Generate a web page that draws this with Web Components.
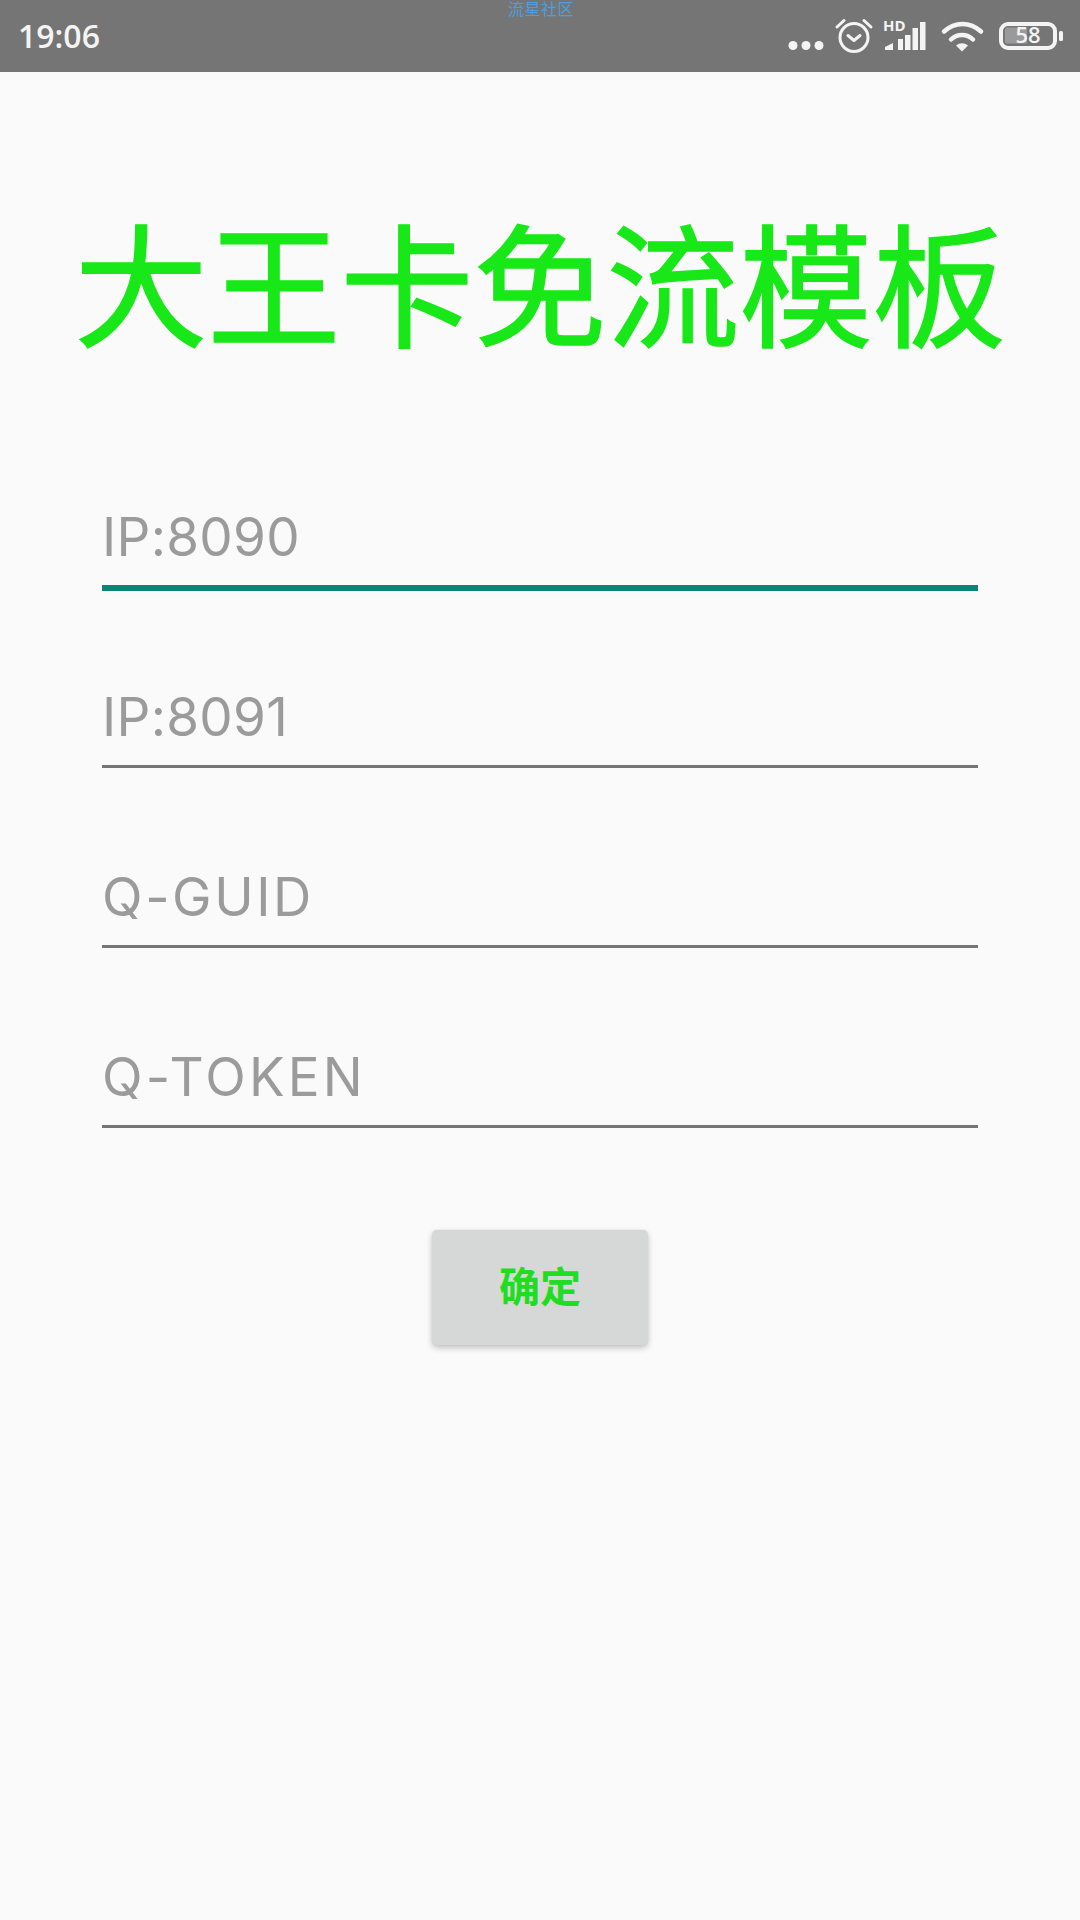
<!DOCTYPE html>
<html lang="zh">
<head>
<meta charset="utf-8">
<title>大王卡免流模板</title>
<style>
  html, body { margin: 0; padding: 0; background: #fafafa; }
  body { width: 1080px; height: 1920px; overflow: hidden; font-family: Inter, "Noto Sans CJK SC", sans-serif; }
</style>
</head>
<body>
<app-screen>
  <status-bar time="19:06" battery="58" watermark="流星社区"></status-bar>
  <page-title>大王卡免流模板</page-title>
  <form-field placeholder="IP:8090" focused style="--hint-spacing: 0.3px"></form-field>
  <form-field placeholder="IP:8091" style="--hint-spacing: 0.3px"></form-field>
  <form-field placeholder="Q-GUID" style="--hint-spacing: 2.6px"></form-field>
  <form-field placeholder="Q-TOKEN" style="--hint-spacing: 3.2px"></form-field>
  <raised-button>确定</raised-button>
</app-screen>

<script>
class AppScreen extends HTMLElement {
  constructor() {
    super();
    this.attachShadow({ mode: 'open' }).innerHTML = `
      <style>
        :host { display: flex; flex-direction: column; width: 1080px; height: 1920px; background: #fafafa; }
      </style>
      <slot></slot>`;
  }
}

class StatusBar extends HTMLElement {
  constructor() {
    super();
    const time = this.getAttribute('time');
    const battery = this.getAttribute('battery');
    const watermark = this.getAttribute('watermark');
    this.attachShadow({ mode: 'open' }).innerHTML = `
      <style>
        :host { display: flex; align-items: center; position: relative; height: 72px; flex: none;
          background: #757575; color: #f4f4f4; padding-left: 18px; box-sizing: border-box; }
        .time { font: 600 32px/1 "Open Sans", "Noto Sans", sans-serif; }
        .mark { position: absolute; left: 508px; top: 0; font: 16px/19px "Liberation Sans", "Noto Sans CJK SC", sans-serif;
          letter-spacing: 0.5px; color: #4c9ee0; }
        svg { display: block; margin-left: auto; }
        text { font-family: "Open Sans", "Noto Sans", sans-serif; fill: #f4f4f4; }
      </style>
      <span class="time">${time}</span>
      <span class="mark">${watermark}</span>
      <svg width="300" height="72" viewBox="780 0 300 72">
        <g fill="#f4f4f4">
          <circle cx="793" cy="45.5" r="4.5"/><circle cx="806" cy="45.5" r="4.5"/><circle cx="819" cy="45.5" r="4.5"/>
        </g>
        <g fill="none" stroke="#f4f4f4" stroke-width="3" stroke-linecap="round" stroke-linejoin="round">
          <circle cx="854" cy="37.5" r="14"/>
          <path d="M848 35.500 854 40.500 860 35.500"/>
          <path d="M837 27 844 20.500M871 27 864 20.500"/>
        </g>
        <text x="883" y="30.500" font-size="15" font-weight="700">HD</text>
        <g fill="#f4f4f4">
          <path d="M885 50v-3l8-4v7z"/>
          <rect x="898" y="39" width="5" height="11"/>
          <rect x="905" y="35" width="5.500" height="15"/>
          <rect x="912.500" y="28" width="5.500" height="22"/>
          <rect x="920" y="22" width="5.500" height="28"/>
        </g>
        <g fill="none" stroke="#f4f4f4" stroke-width="4.500" stroke-linecap="round">
          <path d="M944 31.500C955 21.500 970 21.500 981 31.500"/>
          <path d="M951 39.500C957 33.500 967 33.500 973 39.500"/>
        </g>
        <path d="M956 45.500C960 42.500 964 42.500 968 45.500L962 51.500z" fill="#f4f4f4"/>
        <rect x="1001" y="24" width="54" height="24" rx="7" fill="none" stroke="#f4f4f4" stroke-width="4"/>
        <path d="M1007 27.500h20v16h-20a2 2 0 0 1-2-2v-12a2 2 0 0 1 2-2z" fill="#9a9a9a"/>
        <text x="1028" y="43" font-size="22" font-weight="600" text-anchor="middle">${battery}</text>
        <rect x="1059" y="31" width="4" height="10" rx="1.500" fill="#f4f4f4"/>
      </svg>`;
  }
}

class PageTitle extends HTMLElement {
  constructor() {
    super();
    this.attachShadow({ mode: 'open' }).innerHTML = `
      <style>
        :host { display: block; margin: 132px 0 54px; height: 150px; text-align: center; color: #18e818;
          font: 400 133px/150px "Noto Sans CJK SC", sans-serif; white-space: nowrap;
          -webkit-text-stroke: 1.5px #18e818; }
      </style>
      <slot></slot>`;
  }
}

class FormField extends HTMLElement {
  constructor() {
    super();
    const focused = this.hasAttribute('focused');
    this.attachShadow({ mode: 'open' }).innerHTML = `
      <style>
        :host { display: block; margin: 0 102px; height: 180px; box-sizing: border-box; }
        .box { display: flex; flex-direction: column; justify-content: flex-end; height: 100%; }
        .hint { font: 400 53px/70px Inter, "Noto Sans CJK SC", sans-serif; color: #9b9b9b;
          letter-spacing: var(--hint-spacing, 0); }
        .line { height: ${focused ? 6 : 3}px; margin-bottom: ${focused ? -3 : 0}px;
          background: ${focused ? '#0b8375' : '#757575'}; margin-top: 13px; flex: none; }
      </style>
      <div class="box">
        <span class="hint">${this.getAttribute('placeholder')}</span>
        <div class="line"></div>
      </div>`;
  }
}

class RaisedButton extends HTMLElement {
  constructor() {
    super();
    this.attachShadow({ mode: 'open' }).innerHTML = `
      <style>
        :host { display: flex; align-self: center; align-items: center; justify-content: center;
          width: 216px; height: 115px; margin-top: 102px; padding-bottom: 6px; box-sizing: border-box;
          background: #d6d7d7; border-radius: 5px;
          box-shadow: 0 3px 6px rgba(0,0,0,.22), 0 0 2px rgba(0,0,0,.08);
          color: #1fdd1f; font: 700 41px/1 "Noto Sans CJK SC", sans-serif; }
      </style>
      <slot></slot>`;
  }
}

customElements.define('app-screen', AppScreen);
customElements.define('status-bar', StatusBar);
customElements.define('page-title', PageTitle);
customElements.define('form-field', FormField);
customElements.define('raised-button', RaisedButton);
</script>
</body>
</html>
